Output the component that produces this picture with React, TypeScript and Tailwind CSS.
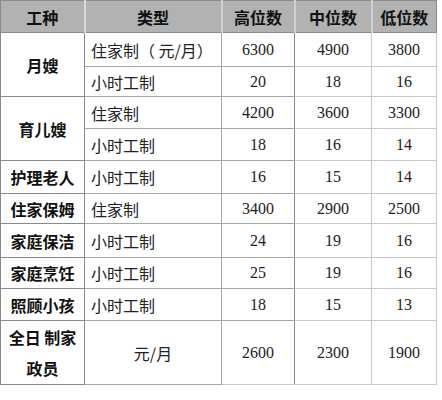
import React from 'react'

type Row = {
  job?: string[]
  span?: number
  type: string
  high: string
  mid: string
  low: string
  h: string
}

const rows: Row[] = [
  { job: ['月嫂'], span: 2, type: '住家制（ 元/月）', high: '6300', mid: '4900', low: '3800', h: 'h-[34px]' },
  { type: '小时工制', high: '20', mid: '18', low: '16', h: 'h-[30px]' },
  { job: ['育儿嫂'], span: 2, type: '住家制', high: '4200', mid: '3600', low: '3300', h: 'h-[32px]' },
  { type: '小时工制', high: '18', mid: '16', low: '14', h: 'h-[32px]' },
  { job: ['护理老人'], type: '小时工制', high: '16', mid: '15', low: '14', h: 'h-[33px]' },
  { job: ['住家保姆'], type: '住家制', high: '3400', mid: '2900', low: '2500', h: 'h-[30px]' },
  { job: ['家庭保洁'], type: '小时工制', high: '24', mid: '19', low: '16', h: 'h-[34px]' },
  { job: ['家庭烹饪'], type: '小时工制', high: '25', mid: '19', low: '16', h: 'h-[31px]' },
  { job: ['照顾小孩'], type: '小时工制', high: '18', mid: '15', low: '13', h: 'h-[32px]' },
]

const cjk = "font-['Noto_Sans_CJK_SC','Noto_Sans',sans-serif]"
const num = "font-['Liberation_Serif','Noto_Sans_CJK_SC',serif] text-[16px] text-[#222] text-center"

export default function App() {
  return (
    <div className="w-[442px] h-[400px] bg-white">
      <table className="border-collapse w-[436px] table-fixed border border-[#8a8a8a]">
        <colgroup>
          <col className="w-[84px]" />
          <col className="w-[137px]" />
          <col className="w-[73px]" />
          <col className="w-[77px]" />
          <col className="w-[65px]" />
        </colgroup>
        <thead>
          <tr className={`h-[32px] bg-[#b2b2b2] ${cjk} text-[16px] font-bold text-[#111]`}>
            <th className="border-r-2 border-r-[#d8d8d8] border-b border-b-[#8a8a8a]">工种</th>
            <th className="border-r-2 border-r-[#d0d0d0] border-b border-b-[#8a8a8a]">类型</th>
            <th className="border-r-2 border-r-[#d0d0d0] border-b border-b-[#8a8a8a]">高位数</th>
            <th className="border-r-2 border-r-[#d0d0d0] border-b border-b-[#8a8a8a]">中位数</th>
            <th className="border-b border-b-[#8a8a8a]">低位数</th>
          </tr>
        </thead>
        <tbody>
          {rows.map((r, i) => (
            <tr key={i} className={r.h}>
              {r.job && (
                <td
                  rowSpan={r.span ?? 1}
                  className={`${cjk} text-[16px] font-bold text-[#111] text-center border border-[#8a8a8a]`}
                >
                  {r.job[0]}
                </td>
              )}
              <td className={`${cjk} text-[16px] text-[#222] pl-[6px] border border-[#a8a8a8]`}>{r.type}</td>
              <td className={`${num} border border-[#a8a8a8] border-r-[#8a8a8a]`}>{r.high}</td>
              <td className={`${num} border border-[#c8c8c8]`}>{r.mid}</td>
              <td className={`${num} border border-[#c8c8c8]`}>{r.low}</td>
            </tr>
          ))}
          <tr className="h-[64px]">
            <td className={`${cjk} text-[16px] font-bold text-[#111] text-center leading-[31px] border border-[#8a8a8a]`}>
              <div>全日 制家</div>
              <div>政员</div>
            </td>
            <td className={`${cjk} text-[16px] text-[#222] text-center border border-[#a8a8a8]`}>元/月</td>
            <td className={`${num} border border-[#c8c8c8] border-r-[#8a8a8a]`}>2600</td>
            <td className={`${num} border border-[#c8c8c8]`}>2300</td>
            <td className={`${num} border border-[#c8c8c8]`}>1900</td>
          </tr>
        </tbody>
      </table>
    </div>
  )
}
